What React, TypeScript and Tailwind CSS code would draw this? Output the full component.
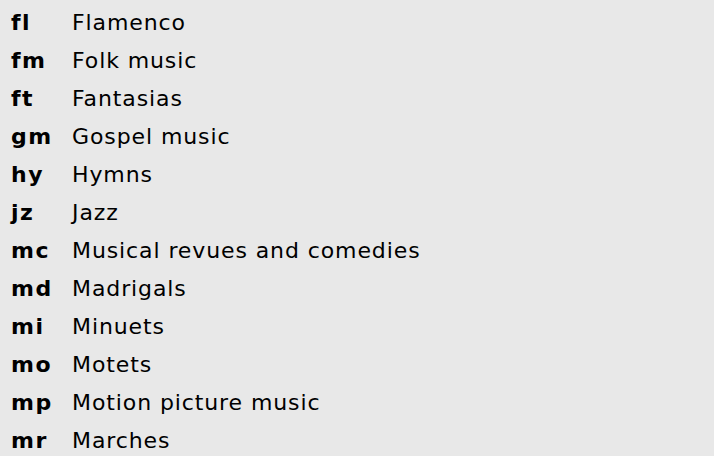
const rows: [string, string][] = [
  ["fl", "Flamenco"],
  ["fm", "Folk music"],
  ["ft", "Fantasias"],
  ["gm", "Gospel music"],
  ["hy", "Hymns"],
  ["jz", "Jazz"],
  ["mc", "Musical revues and comedies"],
  ["md", "Madrigals"],
  ["mi", "Minuets"],
  ["mo", "Motets"],
  ["mp", "Motion picture music"],
  ["mr", "Marches"],
];

export default function App() {
  return (
    <div className="h-[456px] w-[714px] overflow-hidden bg-[#e8e8e8] pl-[11px] pt-[4px] text-[22px] leading-[38px] text-black [font-family:'DejaVu_Sans',sans-serif]">
      {rows.map(([code, name]) => (
        <div key={code} className="flex">
          <span className="w-[61px] font-bold tracking-[1.5px]">{code}</span>
          <span className="tracking-[0.9px]">{name}</span>
        </div>
      ))}
    </div>
  );
}
